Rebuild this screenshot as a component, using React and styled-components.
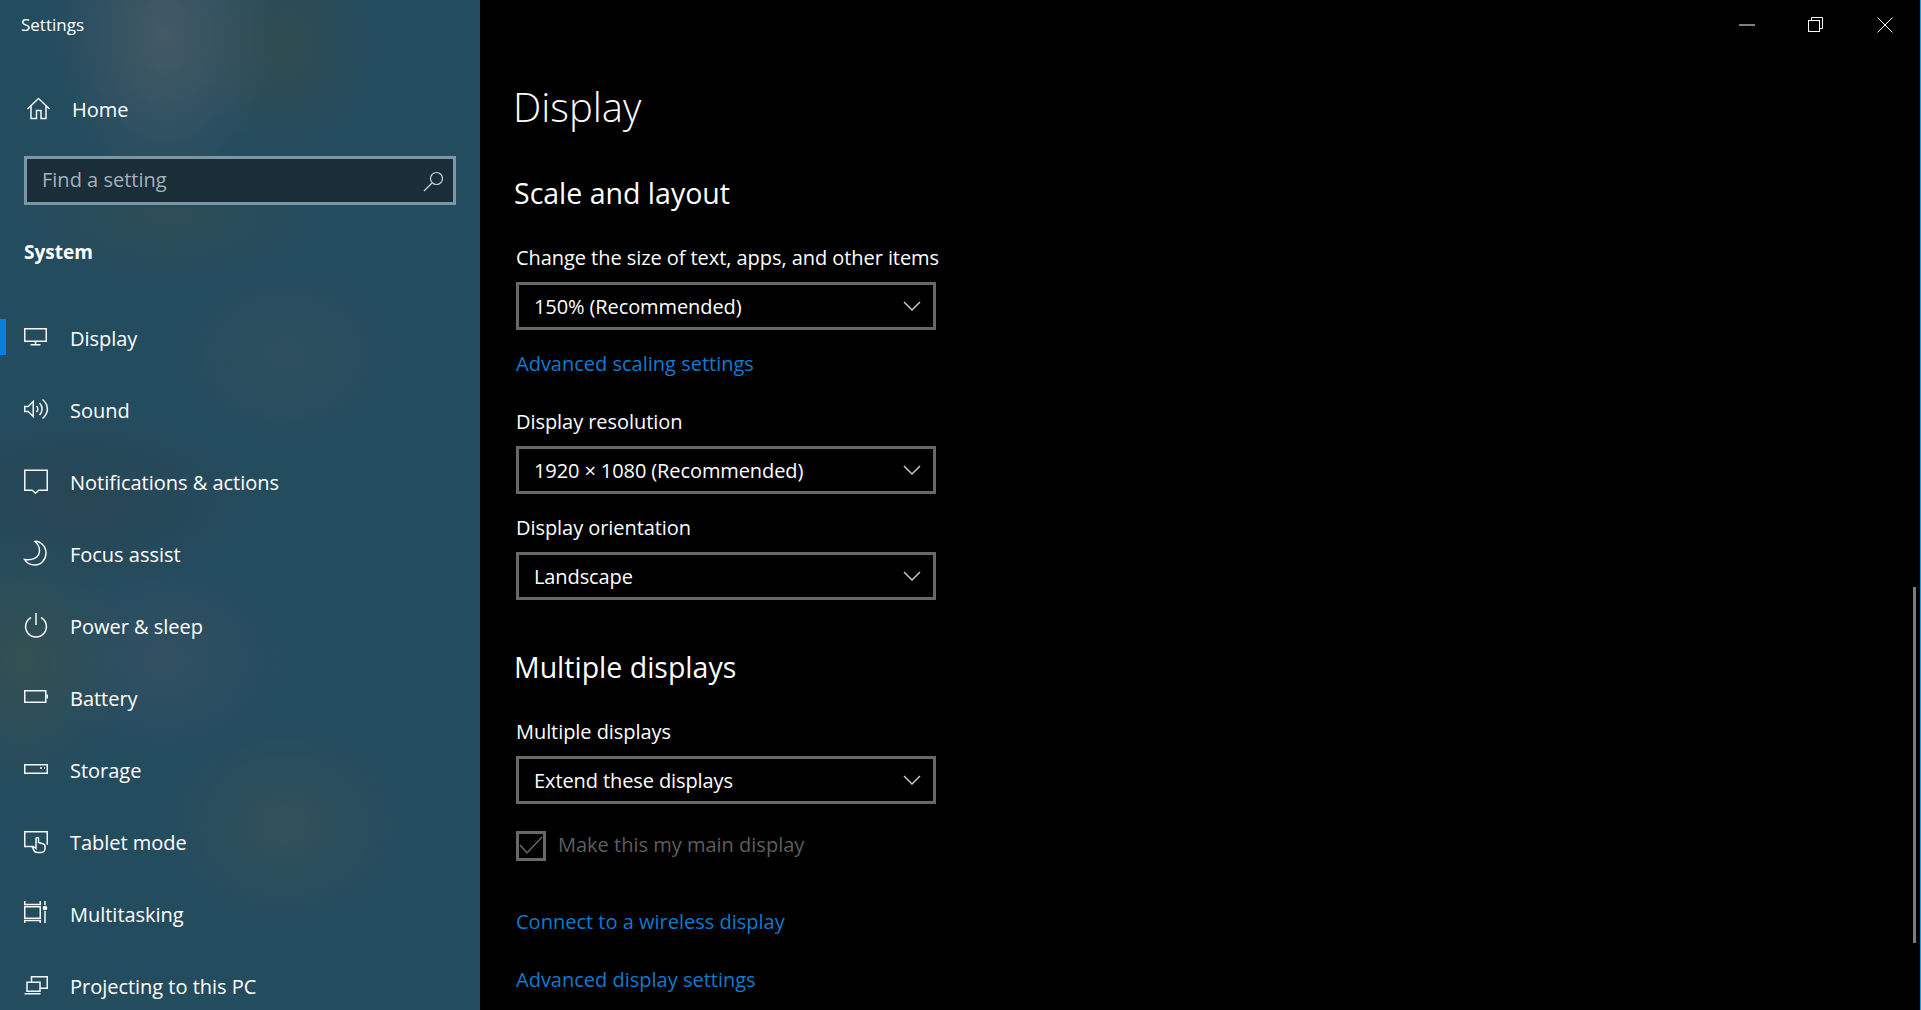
import styled, { createGlobalStyle } from "styled-components";

const GlobalStyle = createGlobalStyle`
  html, body {
    margin: 0;
    padding: 0;
    height: 100%;
    overflow: hidden;
    background: #000;
  }
  * { box-sizing: border-box; }
`;

const Window = styled.div`
  position: relative;
  display: flex;
  width: 100vw;
  height: 100vh;
  overflow: hidden;
  background: #000;
  color: #fff;
  font-family: "Open Sans", "Noto Sans", sans-serif;
  border-right: 1px solid #1aa3e8;
`;

const Sidebar = styled.aside`
  flex: 0 0 480px;
  height: 100%;
  overflow: hidden;
  background:
    radial-gradient(ellipse 110px 150px at 165px 35px, rgba(100, 104, 106, 0.5), transparent),
    radial-gradient(ellipse 90px 110px at 285px 45px, rgba(64, 76, 62, 0.45), transparent),
    radial-gradient(ellipse 150px 70px at 170px 215px, rgba(70, 82, 62, 0.28), transparent),
    radial-gradient(ellipse 110px 90px at 285px 355px, rgba(84, 96, 92, 0.22), transparent),
    radial-gradient(ellipse 180px 90px at 80px 500px, rgba(46, 60, 66, 0.4), transparent),
    radial-gradient(ellipse 120px 100px at 165px 660px, rgba(80, 90, 104, 0.3), transparent),
    radial-gradient(ellipse 100px 130px at 25px 660px, rgba(76, 86, 62, 0.4), transparent),
    radial-gradient(ellipse 120px 100px at 285px 825px, rgba(80, 92, 78, 0.32), transparent),
    #244c5f;
`;

const TitleText = styled.div`
  height: 50px;
  padding-left: 21px;
  line-height: 50px;
  font-size: 17px;
`;

const HomeRow = styled.div`
  display: flex;
  align-items: center;
  gap: 21px;
  height: 72px;
  margin-top: 23px;
  padding-left: 27px;
  font-size: 20px;
`;

const SearchBox = styled.div`
  display: flex;
  align-items: center;
  justify-content: space-between;
  height: 49px;
  margin: 11px 24px 0;
  padding: 0 10px 2px 15px;
  border: 3px solid #7b97a4;
  background: #1a2e3a;
  color: #a3b1b8;
  font-size: 20px;
`;

const SearchIcon = styled.svg`
  flex: none;
  width: 24px;
  height: 24px;
  margin-top: 2px;
  fill: none;
  stroke: #c9d3d8;
  stroke-width: 1.2;
`;

const GroupTitle = styled.div`
  height: 40px;
  margin-top: 27px;
  padding-left: 24px;
  line-height: 40px;
  font-size: 19px;
  font-weight: 700;
`;

const Nav = styled.nav`
  margin-top: 30px;
`;

const NavRow = styled.div`
  position: relative;
  display: flex;
  align-items: center;
  gap: 22px;
  height: 72px;
  padding-left: 24px;
  font-size: 20px;
  letter-spacing: -0.02px;

  &::before {
    content: "";
    display: ${(p) => (p.$active ? "block" : "none")};
    position: absolute;
    left: 0;
    top: 17px;
    width: 6px;
    height: 36px;
    background: #0a7ee0;
  }
`;

const Icon = styled.svg`
  flex: none;
  width: 24px;
  height: 24px;
  overflow: visible;
  fill: none;
  stroke: #f4f7f8;
  stroke-width: 1.5;
`;

const Content = styled.main`
  flex: 1;
  padding: 79px 0 0 36px;
`;

const PageTitle = styled.h1`
  margin: 0 0 0 -3px;
  font-size: 40px;
  font-weight: 300;
  line-height: 56px;
`;

const SectionTitle = styled.h2`
  margin: ${(p) => p.$top}px 0 0 -2px;
  font-size: 28.5px;
  font-weight: 400;
  line-height: 40px;
`;

const Label = styled.div`
  margin-top: ${(p) => p.$top}px;
  font-size: 20px;
  line-height: 28px;
  letter-spacing: -0.06px;
  transform: translateY(1px);
`;

const Select = styled.div`
  display: flex;
  align-items: center;
  justify-content: space-between;
  width: 420px;
  height: 48px;
  margin-top: 11px;
  padding: 0 12px 0 15px;
  border: 3px solid #686868;
  font-size: 20px;
  letter-spacing: -0.1px;
`;

const Chevron = styled.svg`
  width: 18px;
  height: 10px;
  fill: none;
  stroke: #c8c8c8;
  stroke-width: 1.5;
`;

const LinkText = styled.a`
  display: block;
  margin-top: ${(p) => p.$top}px;
  color: #0f7bd0;
  font-size: 20px;
  line-height: 28px;
`;

const CheckRow = styled.div`
  display: flex;
  align-items: center;
  gap: 12px;
  height: 30px;
  margin-top: 27px;
  color: #5e5e5e;
  font-size: 20px;
  line-height: 28px;

  span {
    margin-top: -2px;
  }
`;

const CheckBox = styled.div`
  display: flex;
  align-items: center;
  justify-content: center;
  width: 30px;
  height: 30px;
  border: 3px solid #686868;
`;

const WindowControls = styled.div`
  position: absolute;
  top: 0;
  right: 1px;
  display: flex;
`;

const ControlButton = styled.div`
  display: flex;
  align-items: center;
  justify-content: center;
  width: 69px;
  height: 49px;
`;

const ControlIcon = styled.svg`
  width: 16px;
  height: 16px;
  overflow: visible;
  fill: none;
  stroke: #fff;
  stroke-width: 1;
`;

const ScrollThumb = styled.div`
  position: absolute;
  top: 587px;
  right: 4px;
  width: 3px;
  height: 356px;
  background: #7c7c7c;
`;

const icons = {
  display: (
    <>
      <rect x="0.75" y="2.75" width="21.5" height="12.5" />
      <path d="M11.5 15.5v3M6.5 18.75h10" />
    </>
  ),
  sound: (
    <>
      <path d="M0.75 8.5h3.5l5-5v15l-5-5h-3.5z" />
      <path d="M12.5 8c1.8 1.8 1.8 4.3 0 6M15.5 5c3.4 3.4 3.4 8.6 0 12M18.5 1.5c6.5 5.5 6.5 13.5 0 19" />
    </>
  ),
  notifications: (
    <path d="M0.75 0.25h22.5v20h-8.5l-3.25 3-3.25-3h-7.5z" />
  ),
  focus: (
    <path d="M11 -0.5c4-1 11 4 11 11.5 0 6.5-5 12-11 12-4.5 0-8.5-2-10.5-5.5 8 1.5 15-2 15-9 0-3.5-1.5-6.5-4.5-9z" />
  ),
  power: (
    <>
      <path d="M7 3.5a10.4 10.4 0 1 0 10 0" />
      <path d="M12 -1v12" />
    </>
  ),
  battery: (
    <>
      <rect x="0.75" y="4.75" width="21" height="11.5" />
      <path d="M23.25 8.5v4" />
    </>
  ),
  storage: (
    <>
      <rect x="0.75" y="6.75" width="22.5" height="8.5" />
      <path d="M16 10h2M20 10h1" />
    </>
  ),
  tablet: (
    <>
      <path d="M10 16.5H0.75V1.75h22.5v13" />
      <path d="M13.5 22.5c-2 0-3.5-1.5-4-3l-1-2 1.5-.5 2 1.5V8.5c0-1.5 2.5-1.5 2.5 0v4l5 1.5c1 .3 1.5 1 1.5 2v2.5c0 2.5-2 4-4 4z" />
    </>
  ),
  multitasking: (
    <>
      <rect x="0.75" y="4.75" width="15.5" height="11.5" />
      <path d="M0.75 -1v3.5h15.5V-1M0.75 21v-2.5h15.5V21M21 -1v4M21 9v12" />
      <circle cx="21" cy="6" r="1.6" fill="#f4f7f8" />
    </>
  ),
  projecting: (
    <>
      <path d="M7.5 8V2.75h15.75v11.5H16" />
      <rect x="3" y="8.25" width="13" height="9" />
      <path d="M0.5 19.75h16" />
    </>
  ),
};

const navItems = [
  { id: "display", label: "Display", active: true },
  { id: "sound", label: "Sound" },
  { id: "notifications", label: "Notifications & actions" },
  { id: "focus", label: "Focus assist" },
  { id: "power", label: "Power & sleep" },
  { id: "battery", label: "Battery" },
  { id: "storage", label: "Storage" },
  { id: "tablet", label: "Tablet mode" },
  { id: "multitasking", label: "Multitasking" },
  { id: "projecting", label: "Projecting to this PC" },
];

function Dropdown({ value }) {
  return (
    <Select>
      <span>{value}</span>
      <Chevron viewBox="0 0 18 10">
        <path d="M1 1l8 8 8-8" />
      </Chevron>
    </Select>
  );
}

export default function App() {
  return (
    <Window>
      <GlobalStyle />
      <Sidebar>
        <TitleText>Settings</TitleText>
        <HomeRow>
          <Icon viewBox="0 0 24 24">
            <path d="M0.5 12L11.5 1.5 22.5 12M4 9v12.5h5.5v-8h4.5v8h5V9" />
          </Icon>
          Home
        </HomeRow>
        <SearchBox>
          Find a setting
          <SearchIcon viewBox="0 0 24 24">
            <circle cx="17.5" cy="9.5" r="6" />
            <path d="M13 14l-8 8" />
          </SearchIcon>
        </SearchBox>
        <GroupTitle>System</GroupTitle>
        <Nav>
          {navItems.map((item) => (
            <NavRow key={item.id} $active={item.active}>
              <Icon viewBox="0 0 24 24">{icons[item.id]}</Icon>
              {item.label}
            </NavRow>
          ))}
        </Nav>
      </Sidebar>
      <Content>
        <PageTitle>Display</PageTitle>
        <SectionTitle $top={38}>Scale and layout</SectionTitle>
        <Label $top={30}>Change the size of text, apps, and other items</Label>
        <Dropdown value="150% (Recommended)" />
        <LinkText $top={20}>Advanced scaling settings</LinkText>
        <Label $top={29}>Display resolution</Label>
        <Dropdown value="1920 × 1080 (Recommended)" />
        <Label $top={19}>Display orientation</Label>
        <Dropdown value="Landscape" />
        <SectionTitle $top={47}>Multiple displays</SectionTitle>
        <Label $top={30}>Multiple displays</Label>
        <Dropdown value="Extend these displays" />
        <CheckRow>
          <CheckBox>
            <svg width="24" height="20" viewBox="0 0 24 20" fill="none" stroke="#686868" strokeWidth="1.5">
              <path d="M1 9l7 8L23 1" />
            </svg>
          </CheckBox>
          <span>Make this my main display</span>
        </CheckRow>
        <LinkText $top={47}>Connect to a wireless display</LinkText>
        <LinkText $top={30}>Advanced display settings</LinkText>
      </Content>
      <WindowControls>
        <ControlButton>
          <ControlIcon viewBox="0 0 16 16">
            <path d="M0 8h16" />
          </ControlIcon>
        </ControlButton>
        <ControlButton>
          <ControlIcon viewBox="0 0 16 16">
            <path d="M3.5 3V0.5h11v11H12" />
            <rect x="0.5" y="3.5" width="11" height="11" />
          </ControlIcon>
        </ControlButton>
        <ControlButton>
          <ControlIcon viewBox="0 0 16 16">
            <path d="M0.5 0.5l15 15M15.5 0.5l-15 15" />
          </ControlIcon>
        </ControlButton>
      </WindowControls>
      <ScrollThumb />
    </Window>
  );
}
